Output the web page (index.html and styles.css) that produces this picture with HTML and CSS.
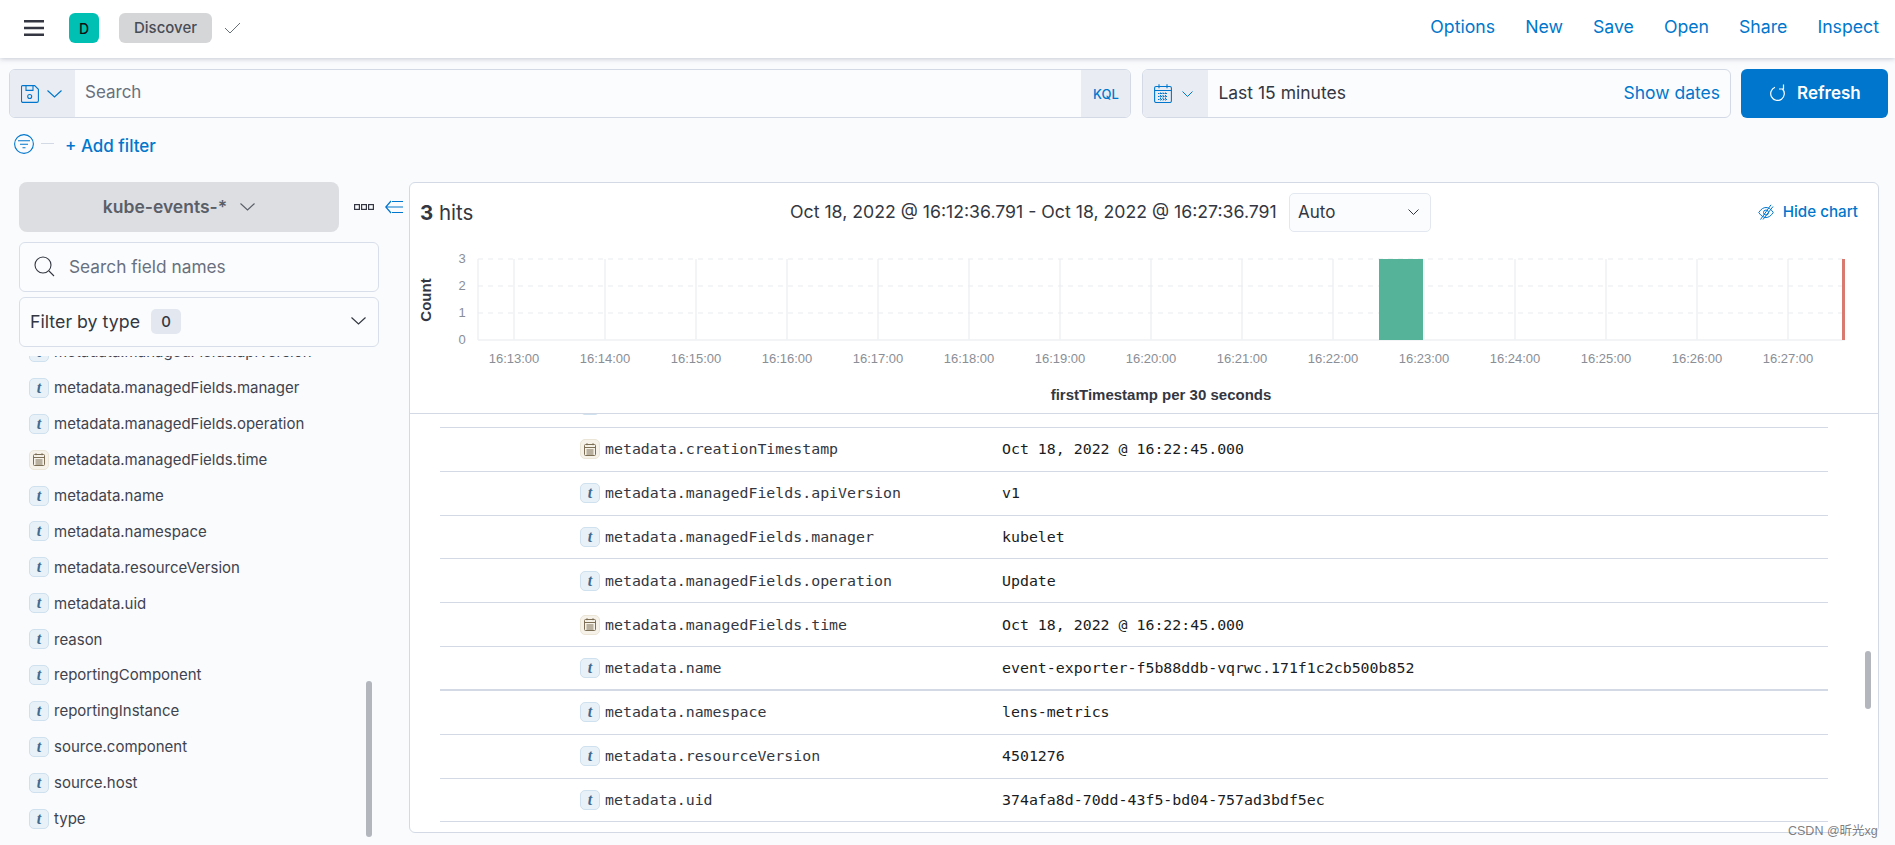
FILE: index.html
```html
<!DOCTYPE html>
<html lang="en">
<head>
<meta charset="utf-8">
<title>Discover</title>
<link rel="stylesheet" href="styles.css">
</head>
<body>
<header class="topbar">
  <svg class="burger" width="20" height="16" viewBox="0 0 20 16"><path d="M0 1.2h20M0 8h20M0 14.8h20" stroke="#343741" stroke-width="2.4" fill="none"/></svg>
  <span class="space-avatar">D</span>
  <span class="crumb">Discover</span>
  <svg class="crumb-check" width="16" height="12" viewBox="0 0 16 12"><path d="M1 6l5 5L16 1" stroke="#69707d" stroke-width="1" fill="none"/></svg>
  <nav class="topnav">
    <a>Options</a><a>New</a><a>Save</a><a>Open</a><a>Share</a><a>Inspect</a>
  </nav>
</header>

<section class="querybar">
  <div class="searchbox">
    <div class="prepend save-prepend">
      <svg width="18" height="18" viewBox="0 0 18 18" fill="none" stroke="#0077cc" stroke-width="1.1"><path d="M1.5.6h12.2l3.7 3.7v11.4a1.7 1.7 0 0 1-1.7 1.7H1.9a1.4 1.4 0 0 1-1.4-1.4V1.6a1 1 0 0 1 1-1z"/><path d="M5 .8v4.6h7V.8"/><circle cx="8.700" cy="11.500" r="2"/></svg>
      <svg width="15" height="8" viewBox="0 0 15 8" fill="none" stroke="#0077cc" stroke-width="1.2"><path d="M.5.5l7 6.500 7-6.500"/></svg>
    </div>
    <div class="search-text">Search</div>
    <div class="kql">KQL</div>
  </div>
  <div class="datebox">
    <div class="prepend date-prepend">
      <svg width="18" height="19" viewBox="0 0 18 19" fill="none" stroke="#0077cc" stroke-width="1.1"><rect x=".6" y="2.500" width="16.800" height="16" rx="1.500"/><path d="M.6 6.500h16.800M5 .3v4M13 .3v4"/><path d="M4 9.500h10M4 12.500h10M4 15.500h10M6.500 8.500v8M9 8.500v8M11.500 8.500v8" stroke-dasharray="1.500 1"/></svg>
      <svg width="11" height="6" viewBox="0 0 11 6" fill="none" stroke="#0077cc" stroke-width="1"><path d="M.5.5l5 5 5-5"/></svg>
    </div>
    <div class="date-text">Last 15 minutes</div>
    <a class="show-dates">Show dates</a>
  </div>
  <button class="refresh">
    <svg width="16" height="17" viewBox="0 0 16 17" fill="none" stroke="#fff" stroke-width="1.2"><path d="M6 3.300A6.800 6.800 0 1 0 13.500 5"/><path d="M14.500.5V5H10"/></svg>
    <span>Refresh</span>
  </button>
</section>

<section class="filterbar">
  <svg width="20" height="20" viewBox="0 0 20 20" fill="none" stroke="#0077cc" stroke-width="1.1"><circle cx="10" cy="10" r="9.400"/><path d="M4 6.800h12M6 10.300h8M8.500 13.800h3"/></svg>
  <span class="filter-dash"></span>
  <a class="add-filter">+ Add filter</a>
</section>

<main class="workspace">
  <aside class="sidebar">
    <div class="index-row">
      <div class="index-btn">
        <span>kube-events-*</span>
        <svg width="15" height="8" viewBox="0 0 15 8" fill="none" stroke="#5a5e68" stroke-width="1.1"><path d="M.5.5l7 6.500 7-6.500"/></svg>
      </div>
      <svg class="dots" width="20" height="6" viewBox="0 0 20 6" fill="none" stroke="#343741" stroke-width="1.200"><rect x=".6" y=".6" width="4.800" height="4.800"/><rect x="7.600" y=".6" width="4.800" height="4.800"/><rect x="14.600" y=".6" width="4.800" height="4.800"/></svg>
      <svg class="collapse" width="18" height="14" viewBox="0 0 18 14" fill="none" stroke="#0077cc" stroke-width="1.200"><path d="M6 1L.8 7 6 13M.8 7H18M7 1.500h11M7 12.500h11"/></svg>
    </div>
    <div class="field-search">
      <svg width="21" height="21" viewBox="0 0 21 21" fill="none" stroke="#343741" stroke-width="1.100"><circle cx="9" cy="9" r="8"/><path d="M15 15l5 5"/></svg>
      <span>Search field names</span>
    </div>
    <div class="type-filter">
      <span>Filter by type</span>
      <span class="badge">0</span>
      <svg class="type-chevron" width="15" height="8" viewBox="0 0 15 8" fill="none" stroke="#343741" stroke-width="1.200"><path d="M.5.5l7 6.500 7-6.500"/></svg>
    </div>
    <div class="fieldlist">
      <ul class="fields">
        <li><i class="tok tok-t">t</i>metadata.managedFields.apiVersion</li>
        <li><i class="tok tok-t">t</i>metadata.managedFields.manager</li>
        <li><i class="tok tok-t">t</i>metadata.managedFields.operation</li>
        <li><i class="tok tok-d"><svg width="12" height="13" viewBox="0 0 12 13" fill="none" stroke="#7c6f55"><rect x=".5" y="1.500" width="11" height="11" rx="1"/><path d="M.5 4.500h11M3 .2v2M9 .2v2M2.500 7h7M2.500 9h7M2.500 11h7" /></svg></i>metadata.managedFields.time</li>
        <li><i class="tok tok-t">t</i>metadata.name</li>
        <li><i class="tok tok-t">t</i>metadata.namespace</li>
        <li><i class="tok tok-t">t</i>metadata.resourceVersion</li>
        <li><i class="tok tok-t">t</i>metadata.uid</li>
        <li><i class="tok tok-t">t</i>reason</li>
        <li><i class="tok tok-t">t</i>reportingComponent</li>
        <li><i class="tok tok-t">t</i>reportingInstance</li>
        <li><i class="tok tok-t">t</i>source.component</li>
        <li><i class="tok tok-t">t</i>source.host</li>
        <li><i class="tok tok-t">t</i>type</li>
      </ul>
      <span class="side-thumb"></span>
    </div>
  </aside>

  <section class="panel">
    <div class="panel-head">
      <div class="hits"><b>3</b> hits</div>
      <div class="range">Oct 18, 2022 @ 16:12:36.791 - Oct 18, 2022 @ 16:27:36.791</div>
      <div class="auto">
        <span>Auto</span>
        <svg width="11" height="6" viewBox="0 0 11 6" fill="none" stroke="#343741"><path d="M.5.5l5 5 5-5"/></svg>
      </div>
      <a class="hide-chart">
        <svg width="16" height="16" viewBox="0 0 16 16" fill="none" stroke="#0077cc"><path d="M.8 8.500C3 5 5.500 3.500 8 3.500s5 1.500 7.200 5C13 12 10.500 13.500 8 13.500S3 12 .8 8.500z"/><circle cx="8" cy="8.500" r="2.500"/><path d="M13 .8L2.500 15.500M15 2.500L5 15.500"/></svg>
        Hide chart
      </a>
    </div>
    <svg class="chart" width="1468" height="170" viewBox="410 243 1468 170">
      <g class="grid-v">
        <path d="M514 259V340M605 259V340M696 259V340M787 259V340M878 259V340M969 259V340M1060 259V340M1151 259V340M1242 259V340M1333 259V340M1424 259V340M1515 259V340M1606 259V340M1697 259V340M1788 259V340"/>
        <path d="M478 259V340M478 340H1845"/>
      </g>
      <path class="grid-h" d="M478 259H1845M478 286H1845M478 313H1845"/>
      <rect class="bar" x="1379" y="259" width="44" height="81"/>
      <rect class="now" x="1842" y="259" width="3" height="81"/>
      <g class="tick-y">
        <text x="462" y="263">3</text>
        <text x="462" y="290">2</text>
        <text x="462" y="317">1</text>
        <text x="462" y="344">0</text>
      </g>
      <g class="tick-x">
        <text x="514" y="363">16:13:00</text><text x="605" y="363">16:14:00</text><text x="696" y="363">16:15:00</text>
        <text x="787" y="363">16:16:00</text><text x="878" y="363">16:17:00</text><text x="969" y="363">16:18:00</text>
        <text x="1060" y="363">16:19:00</text><text x="1151" y="363">16:20:00</text><text x="1242" y="363">16:21:00</text>
        <text x="1333" y="363">16:22:00</text><text x="1424" y="363">16:23:00</text><text x="1515" y="363">16:24:00</text>
        <text x="1606" y="363">16:25:00</text><text x="1697" y="363">16:26:00</text><text x="1788" y="363">16:27:00</text>
      </g>
      <text class="axis-title" transform="rotate(-90 431 300)" x="431" y="300">Count</text>
      <text class="axis-title" x="1161" y="400">firstTimestamp per 30 seconds</text>
    </svg>
    <div class="docs">
      <div class="doc-rows">
        <div class="doc-row"><i class="tok tok-t">t</i><span></span><span></span></div>
        <div class="doc-row"><i class="tok tok-d"><svg width="12" height="13" viewBox="0 0 12 13" fill="none" stroke="#7c6f55"><rect x=".5" y="1.500" width="11" height="11" rx="1"/><path d="M.5 4.500h11M3 .2v2M9 .2v2M2.500 7h7M2.500 9h7M2.500 11h7"/></svg></i><span>metadata.creationTimestamp</span><span>Oct 18, 2022 @ 16:22:45.000</span></div>
        <div class="doc-row"><i class="tok tok-t">t</i><span>metadata.managedFields.apiVersion</span><span>v1</span></div>
        <div class="doc-row"><i class="tok tok-t">t</i><span>metadata.managedFields.manager</span><span>kubelet</span></div>
        <div class="doc-row"><i class="tok tok-t">t</i><span>metadata.managedFields.operation</span><span>Update</span></div>
        <div class="doc-row"><i class="tok tok-d"><svg width="12" height="13" viewBox="0 0 12 13" fill="none" stroke="#7c6f55"><rect x=".5" y="1.500" width="11" height="11" rx="1"/><path d="M.5 4.500h11M3 .2v2M9 .2v2M2.500 7h7M2.500 9h7M2.500 11h7"/></svg></i><span>metadata.managedFields.time</span><span>Oct 18, 2022 @ 16:22:45.000</span></div>
        <div class="doc-row doc-row-thick"><i class="tok tok-t">t</i><span>metadata.name</span><span>event-exporter-f5b88ddb-vqrwc.171f1c2cb500b852</span></div>
        <div class="doc-row"><i class="tok tok-t">t</i><span>metadata.namespace</span><span>lens-metrics</span></div>
        <div class="doc-row"><i class="tok tok-t">t</i><span>metadata.resourceVersion</span><span>4501276</span></div>
        <div class="doc-row"><i class="tok tok-t">t</i><span>metadata.uid</span><span>374afa8d-70dd-43f5-bd04-757ad3bdf5ec</span></div>
      </div>
      <span class="doc-thumb"></span>
    </div>
  </section>
</main>
<div class="watermark">CSDN @昕光xg</div>
</body>
</html>
```

FILE: styles.css
```css
* { box-sizing: border-box; }
html, body { margin: 0; height: 845px; overflow: hidden; }
body {
  background: #fafbfd;
  color: #343741;
  font-family: Inter, "Noto Sans", sans-serif;
  font-size: 16px;
  position: relative;
}
a { color: #0077cc; }

.topbar {
  height: 58px;
  background: #fff;
  box-shadow: 0 1px 5px rgba(80, 90, 120, .3);
  display: flex;
  align-items: center;
  padding: 0 16px 2px 24px;
}
.space-avatar {
  width: 30px; height: 30px; margin-left: 25px;
  border-radius: 6px; background: #00bfb3; color: #111;
  font-size: 14px; font-weight: 500;
  display: flex; align-items: center; justify-content: center;
}
.crumb {
  width: 93px; height: 30px; margin-left: 20px;
  background: #d5d6d8; border-radius: 6px; color: #484c55;
  font-size: 15px; font-weight: 500;
  display: flex; align-items: center; justify-content: center; padding-bottom: 1px;
}
.crumb-check { margin-left: 12px; }
.topnav { margin-left: auto; display: flex; gap: 30px; font-size: 17.700px; padding-bottom: 3px; }

.querybar { display: flex; padding: 11px 7px 0 9px; gap: 10px; }
.searchbox, .datebox {
  height: 49px; border: 1px solid #d3dae6; border-radius: 6px;
  display: flex; align-items: stretch; overflow: hidden; background: #fbfcfe;
}
.searchbox { width: 1123px; }
.datebox { width: 589px; margin-left: 1px; }
.prepend { background: #e9edf3; display: flex; align-items: center; }
.save-prepend { width: 65px; padding-left: 11px; gap: 8px; }
.date-prepend { width: 65px; padding-left: 11px; gap: 10px; }
.search-text { flex: 1; display: flex; align-items: center; padding: 0 0 3px 10px; color: #69707d; font-size: 17px; }
.kql { width: 49px; background: #e9edf3; color: #0077cc; font-size: 13px; font-weight: 500; display: flex; align-items: center; justify-content: center; }
.date-text { flex: 1; display: flex; align-items: center; padding: 0 0 2px 10px; font-size: 17.500px; }
.show-dates { display: flex; align-items: center; padding: 0 10px 2px 0; font-size: 17.500px; }
.refresh {
  width: 147px; height: 49px; border: 0; border-radius: 6px; background: #0077cc; color: #fff;
  font: 600 17px Inter, sans-serif;
  display: flex; align-items: center; gap: 12px; padding: 0 0 2px 28px;
}

.filterbar { height: 64px; display: flex; align-items: flex-start; padding: 16px 0 0 14px; }
.filter-dash { width: 13px; height: 1px; background: #d3dae6; margin: 9px 0 0 7px; }
.add-filter { margin: 0 0 0 11px; font-size: 17px; font-weight: 500; line-height: 24px; }

.workspace { display: flex; padding-left: 19px; height: 651px; }
.sidebar { width: 390px; display: flex; flex-direction: column; }
.index-row { display: flex; align-items: center; height: 50px; flex: none; }
.index-btn {
  width: 320px; height: 50px; border-radius: 8px; background: #dddee1; color: #5a5e68;
  font-size: 17.500px; font-weight: 600;
  display: flex; align-items: center; justify-content: center; gap: 13px; padding-bottom: 1px;
}
.dots { margin-left: 15px; }
.collapse { margin-left: 11px; }
.field-search, .type-filter {
  width: 360px; height: 50px; flex: none; border: 1px solid #d8dfea; border-radius: 6px;
  background: #fbfcfe; display: flex; align-items: center;
}
.field-search { margin-top: 10px; padding: 0 0 2px 14px; gap: 14px; color: #69707d; font-size: 17.300px; }
.type-filter { margin-top: 5px; padding: 0 12px 2px 10px; font-size: 17.800px; }
.badge {
  width: 30px; height: 25px; margin-left: 11px; border-radius: 5px; background: #e3e8f0;
  font-size: 15px; font-weight: 500; display: flex; align-items: center; justify-content: center;
}
.type-chevron { margin-left: auto; }
.fieldlist { position: relative; margin-top: 9px; height: 489px; flex: none; overflow: hidden; }
.fields { list-style: none; margin: -22px 0 0; padding: 0 0 0 10px; }
.fields li { height: 35.900px; display: flex; align-items: center; gap: 5px; font-size: 15px; color: #3f434d; }
.side-thumb { position: absolute; left: 347px; top: 325px; width: 6px; height: 156px; border-radius: 3px; background: #b3b6bd; }

.tok {
  flex: none; width: 20px; height: 20px; border-radius: 5px;
  display: flex; align-items: center; justify-content: center;
  font: italic 700 16px "Liberation Serif", serif;
}
.tok-t { background: #e8f1f8; border: 1px solid #cfe0ee; color: #3f6a8f; }
.tok-d { background: #f6f2ea; border: 1px solid #ebe5d7; }

.panel {
  position: relative; width: 1470px; height: 651px; border: 1px solid #d3dae6; border-radius: 6px;
  background: #fff; display: flex; flex-direction: column; overflow: hidden;
}
.panel-head { height: 60px; display: flex; align-items: flex-start; padding: 10px 20px 0 10px; flex: none; }
.hits { font-size: 20.500px; width: 232px; margin-top: 8px; line-height: 24px; }
.hits b { font-weight: 700; }
.range { width: 499px; margin-left: 138px; margin-top: 8px; line-height: 22px; font-size: 17.700px; white-space: nowrap; }
.auto {
  width: 142px; height: 39px; border: 1px solid #e3e8f0; border-radius: 5px; background: #fbfcfe;
  display: flex; align-items: center; justify-content: space-between; padding: 0 11px 2px 8px; font-size: 17px;
}
.hide-chart { margin-left: auto; display: flex; align-items: center; gap: 9px; font-size: 15.200px; font-weight: 500; height: 37px; }
.chart { display: block; flex: none; font-family: "Liberation Sans", sans-serif; }
.grid-v path { stroke: #eff1f4; fill: none; stroke-width: 1.500; }
.grid-h { stroke: #e9ebef; fill: none; stroke-dasharray: 5 5; }
.bar { fill: #54b399; }
.now { fill: #d97a70; }
.tick-y text, .tick-x text { fill: #8a8e96; font-size: 13px; text-anchor: middle; }
.axis-title { fill: #343741; font-size: 15px; font-weight: 700; text-anchor: middle; }

.docs { flex: 1; overflow: hidden; padding-left: 30px; border-top: 1px solid #d3dae6; }
.doc-rows { margin-top: -30px; width: 1388px; }
.doc-row {
  height: 43.850px; border-bottom: 1px solid #d3dae6; padding-left: 140px;
  display: grid; grid-template-columns: 20px 397px 1fr; column-gap: 5px; align-items: center;
  font-family: "DejaVu Sans Mono", "Liberation Mono", monospace; font-size: 14.900px; color: #343741;
}
.doc-row > span:last-child { margin-left: -5px; color: #1a1c21; }
.doc-row-thick { border-bottom-width: 2px; }
.doc-thumb { position: absolute; left: 1455px; top: 468px; width: 6px; height: 58px; border-radius: 3px; background: #b3b6bd; }

.watermark {
  position: absolute; left: 1788px; top: 820px; color: rgba(70, 70, 70, .7);
  font: 12.500px "Liberation Sans", "Noto Sans CJK SC", sans-serif; white-space: nowrap;
}
```
